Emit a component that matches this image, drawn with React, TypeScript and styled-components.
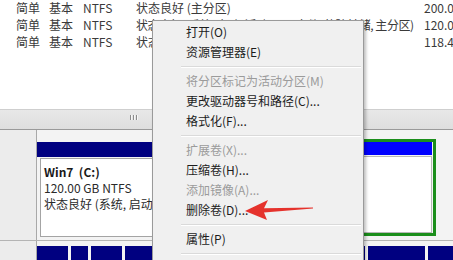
import React from "react";
import styled, { createGlobalStyle } from "styled-components";

const GlobalStyle = createGlobalStyle`
  html, body { margin: 0; padding: 0; background: #ffffff; }
  body {
    font-family: "Noto Sans CJK SC", "Noto Sans", sans-serif;
    font-size: 12px;
    color: #333333;
  }
  #root { width: 453px; height: 260px; overflow: hidden; }
`;

const Window = styled.div`
  position: relative;
  width: 453px;
  height: 260px;
  overflow: hidden;
  display: flex;
  flex-direction: column;
  background: #ffffff;
`;

const ListPane = styled.div`
  height: 109px;
  flex: none;
  background: #ffffff;
  overflow: hidden;
`;

const ListBody = styled.div`
  margin-top: -1px;
  display: flex;
  flex-direction: column;
`;

const Row = styled.div`
  display: grid;
  grid-template-columns: 33px 34px 53px 288px 1fr;
  padding-left: 16px;
  height: 17px;
  line-height: 17px;
  white-space: nowrap;
  color: #3a3a3a;
`;

const Cell = styled.span<{ $tight?: boolean }>`
  overflow: visible;
  letter-spacing: ${(p) => (p.$tight ? "-0.45px" : "normal")};
`;

const ScrollBar = styled.div`
  height: 19px;
  flex: none;
  border-top: 1px solid #cfcfcf;
  border-bottom: 1px solid #9a9a9a;
  background: linear-gradient(#e8e8e8, #dedede);
  display: flex;
`;

const Thumb = styled.div`
  width: 268px;
  display: flex;
  align-items: center;
  justify-content: center;
`;

const Grip = styled.div`
  display: flex;
  gap: 1px;
  margin-top: -4px;
`;

const GripLine = styled.span`
  width: 1px;
  height: 5px;
  background: #8c8c8c;
  box-shadow: 1px 0 0 #f6f6f6;
  margin-right: 1px;
`;

const GraphPane = styled.div`
  flex: 1;
  background: #f3f3f3;
  display: flex;
  flex-direction: column;
`;

const DiskRow = styled.div<{ $h: number }>`
  height: ${(p) => p.$h}px;
  flex: none;
  display: flex;
  border-bottom: 1px solid #b4b4b4;
`;

const DiskLabel = styled.div`
  width: 36px;
  flex: none;
  background: #ececec;
  border-right: 1px solid #a8a8a8;
`;

const Partitions = styled.div<{ $top: number }>`
  flex: 1;
  display: flex;
  align-items: flex-start;
  gap: 3px;
  padding-top: ${(p) => p.$top}px;
  min-width: 0;
`;

const Primary = styled.div<{ $w: number }>`
  width: ${(p) => p.$w}px;
  flex: none;
  padding-top: 3px;
  display: flex;
  flex-direction: column;
`;

const NavyHeader = styled.div`
  height: 15px;
  background: #000080;
`;

const PartBody = styled.div`
  margin: 1px 0 0 3px;
  height: 72px;
  border: 1px solid #a4a4a4;
  background: #ffffff;
  padding: 5px 0 0 3px;
  line-height: 16px;
  white-space: nowrap;
  overflow: hidden;
  color: #2a2a2a;
`;

const PartTitle = styled.div`
  font-weight: bold;
  color: #1a1a1a;
`;

const Extended = styled.div<{ $w: number }>`
  width: ${(p) => p.$w}px;
  flex: none;
  border: 3px solid #1b8e1b;
  display: flex;
  flex-direction: column;
`;

const BlueHeader = styled.div`
  height: 13px;
  margin-right: 1px;
  background: #0000ff;
`;

const LogicalBody = styled.div`
  margin: 1px 1px 0 0;
  height: 75px;
  border: 1px solid #b8b8b8;
  background: #ffffff;
`;

const Block = styled.div<{ $w?: number }>`
  height: 20px;
  background: #000080;
  flex: ${(p) => (p.$w ? "none" : "1")};
  width: ${(p) => (p.$w ? `${p.$w}px` : "auto")};
`;

const Menu = styled.div`
  position: absolute;
  left: 152px;
  top: 20px;
  width: 210px;
  height: 250px;
  background: #f0f0f0;
  border: 1px solid #9a9a9a;
  box-shadow: 2px 2px 3px rgba(0, 0, 0, 0.25);
  padding-top: 1px;
  display: flex;
  flex-direction: column;
`;

const MenuItem = styled.div<{ $disabled?: boolean }>`
  height: 20px;
  flex: none;
  line-height: 20px;
  padding-left: 33px;
  white-space: nowrap;
  color: ${(p) => (p.$disabled ? "#9b9b9b" : "#1c1c1c")};
`;

const Separator = styled.div`
  height: 9px;
  flex: none;
  display: flex;
  align-items: center;
  padding-left: 28px;
  padding-right: 2px;
  &::before {
    content: "";
    flex: 1;
    height: 1px;
    background: #dadada;
    box-shadow: 0 1px 0 #ffffff;
  }
`;

const Arrow = styled.svg`
  position: absolute;
  left: 240px;
  top: 196px;
  width: 80px;
  height: 30px;
`;

const rows = [
  ["简单", "基本", "NTFS", "状态良好 (主分区)", "200.0"],
  ["简单", "基本", "NTFS", "状态良好 (系统, 启动, 活动, 页面文件, 故障转储, 主分区)", "120.0"],
  ["简单", "基本", "NTFS", "状态良好 (逻辑驱动器)", "118.4"],
];

type Item = { label: string; disabled?: boolean } | "sep";

const items: Item[] = [
  { label: "打开(O)" },
  { label: "资源管理器(E)" },
  "sep",
  { label: "将分区标记为活动分区(M)", disabled: true },
  { label: "更改驱动器号和路径(C)..." },
  { label: "格式化(F)..." },
  "sep",
  { label: "扩展卷(X)...", disabled: true },
  { label: "压缩卷(H)..." },
  { label: "添加镜像(A)...", disabled: true },
  { label: "删除卷(D)..." },
  "sep",
  { label: "属性(P)" },
  "sep",
  { label: "帮助(H)" },
];

export default function App() {
  return (
    <>
      <GlobalStyle />
      <Window>
        <ListPane>
          <ListBody>
            {rows.map((r, i) => (
              <Row key={i}>
                {r.map((c, j) => (
                  <Cell key={j} $tight={i === 1 && j === 3}>
                    {c}
                  </Cell>
                ))}
              </Row>
            ))}
          </ListBody>
        </ListPane>
        <ScrollBar>
          <Thumb>
            <Grip>
              <GripLine />
              <GripLine />
              <GripLine />
            </Grip>
          </Thumb>
        </ScrollBar>
        <GraphPane>
          <DiskRow $h={110}>
            <DiskLabel />
            <Partitions $top={9}>
              <Primary $w={213}>
                <NavyHeader />
                <PartBody>
                  <PartTitle>Win7&nbsp;&nbsp;(C:)</PartTitle>
                  <div>120.00 GB NTFS</div>
                  <div>状态良好 (系统, 启动, 页面文件, 活动, 故障转储, 主分区)</div>
                </PartBody>
              </Primary>
              <Extended $w={177}>
                <BlueHeader />
                <LogicalBody />
              </Extended>
            </Partitions>
          </DiskRow>
          <DiskRow $h={30}>
            <DiskLabel />
            <Partitions $top={5}>
              <Block $w={31} />
              <Block $w={17} />
              <Block $w={31} />
              <Block $w={240} />
              <Block $w={57} />
              <Block />
            </Partitions>
          </DiskRow>
        </GraphPane>
        <Menu>
          {items.map((it, i) =>
            it === "sep" ? (
              <Separator key={i} />
            ) : (
              <MenuItem key={i} $disabled={it.disabled}>
                {it.label}
              </MenuItem>
            )
          )}
        </Menu>
        <Arrow viewBox="0 0 80 30">
          <polygon
            points="5,15 28,4 24,12.2 73,11.4 73,12.6 24,16.4 27,24"
            fill="#e5322c"
          />
        </Arrow>
      </Window>
    </>
  );
}
